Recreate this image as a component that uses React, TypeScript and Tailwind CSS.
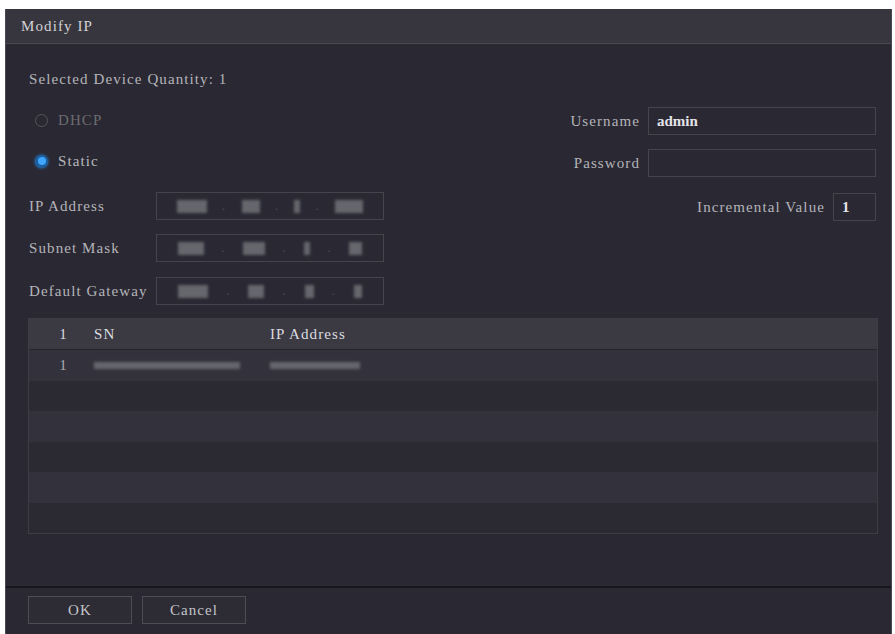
import React from 'react'

const serif = { fontFamily: '"Liberation Serif", "Times New Roman", serif' }

function Blur({ w, h = 13, className = '' }: { w: number; h?: number; className?: string }) {
  return <div className={`bg-[#66666d] blur-[1.5px] ${className}`} style={{ width: w, height: h }} />
}

function IpBox({ parts }: { parts: number[] }) {
  return (
    <div className="w-[228px] h-[28px] border border-[#45444d] flex items-center justify-around px-3">
      {parts.map((w, i) => (
        <React.Fragment key={i}>
          <Blur w={w} />
          {i < parts.length - 1 && <span className="text-[#4f4f56] text-xs">.</span>}
        </React.Fragment>
      ))}
    </div>
  )
}

function Radio({ checked, label }: { checked?: boolean; label: string }) {
  return (
    <div className="h-[28px] flex items-center gap-[10px] pl-[7px]">
      {checked ? (
        <div className="w-[13px] h-[13px] rounded-full bg-[#1d5f9c] flex items-center justify-center shadow-[0_0_3px_#2a8ae0]">
          <div className="w-[8px] h-[8px] rounded-full bg-[#3fa6ff]" />
        </div>
      ) : (
        <div className="w-[13px] h-[13px] rounded-full border border-[#55555b]" />
      )}
      <span className={checked ? 'text-[#b8b8bc]' : 'text-[#6c6c72]'}>{label}</span>
    </div>
  )
}

export default function App() {
  const rows = [
    'h-[31px] bg-[#33323c]',
    'h-[30px] bg-[#2b2a33]',
    'h-[31px] bg-[#33323c]',
    'h-[30px] bg-[#2b2a33]',
    'h-[31px] bg-[#33323c]',
    'h-[30px] bg-[#2b2a33]',
  ]

  return (
    <div
      className="w-[895px] h-[634px] bg-white pt-[9px] pl-[5px] overflow-hidden text-[15px] tracking-[1.1px]"
      style={serif}
    >
      <div className="w-[887px] h-[625px] flex flex-col border-l border-r border-[#4a4952]">
        {/* Title */}
        <div className="h-[35px] bg-[#37363e] border-b border-[#4b4a53] flex items-center pl-[15px] text-[#d2d2d6]">
          Modify IP
        </div>

        {/* Body */}
        <div className="flex-1 bg-[#2a2933] pl-[22px] pr-[15px] pt-[27px] text-[#b4b4b9]">
          <div className="h-[17px] leading-[17px] pl-px">Selected Device Quantity: 1</div>

          <div className="flex justify-between">
            <div className="flex flex-col mt-[18px]">
              <Radio label="DHCP" />
              <div className="mt-[13px]">
                <Radio checked label="Static" />
              </div>
              <div className="mt-[17px] h-[28px] flex items-center">
                <span className="w-[128px] pl-px">IP Address</span>
                <IpBox parts={[30, 18, 6, 28]} />
              </div>
              <div className="mt-[14px] h-[28px] flex items-center">
                <span className="w-[128px] pl-px">Subnet Mask</span>
                <IpBox parts={[26, 22, 6, 13]} />
              </div>
              <div className="mt-[15px] h-[28px] flex items-center">
                <span className="w-[128px] pl-px whitespace-nowrap">Default Gateway</span>
                <IpBox parts={[30, 16, 9, 8]} />
              </div>
            </div>

            <div className="flex flex-col items-end mt-[19px]">
              <div className="h-[28px] flex items-center gap-[8px]">
                <span>Username</span>
                <div className="w-[228px] h-[28px] border border-[#45444d] flex items-center pl-[8px] text-[#e4e4e8] font-bold tracking-normal">
                  admin
                </div>
              </div>
              <div className="mt-[14px] h-[28px] flex items-center gap-[8px]">
                <span>Password</span>
                <div className="w-[228px] h-[28px] border border-[#45444d]" />
              </div>
              <div className="mt-[16px] h-[28px] flex items-center gap-[8px]">
                <span>Incremental Value</span>
                <div className="w-[43px] h-[28px] border border-[#45444d] flex items-center pl-[8px] text-[#e4e4e8] font-bold">
                  1
                </div>
              </div>
            </div>
          </div>

          {/* Table */}
          <div className="mt-[13px] w-[850px] border border-[#3e3d46]">
            <div className="h-[31px] bg-[#3b3a42] border-b border-[#25242b] flex items-center text-[#dcdce0]">
              <span className="w-[65px] text-center pl-[4px]">1</span>
              <span className="w-[176px]">SN</span>
              <span>IP Address</span>
            </div>
            {rows.map((cls, i) => (
              <div key={i} className={`${cls} flex items-center`}>
                {i === 0 && (
                  <>
                    <span className="w-[65px] text-center pl-[4px] text-[#a8a8ae]">1</span>
                    <div className="w-[176px]">
                      <Blur w={146} h={7} className="bg-[#5a5a62]" />
                    </div>
                    <Blur w={90} h={7} className="bg-[#4b4d55]" />
                  </>
                )}
              </div>
            ))}
          </div>
        </div>

        {/* Footer */}
        <div className="h-[48px] bg-[#2a2933] border-t-2 border-[#18171d] pl-[22px] pt-[8px] flex gap-[10px] text-[#c4c4c8]">
          <button className="w-[104px] h-[28px] border border-[#4d4c55] bg-[#2d2c35]">OK</button>
          <button className="w-[104px] h-[28px] border border-[#4d4c55] bg-[#2d2c35]">Cancel</button>
        </div>
      </div>
    </div>
  )
}
